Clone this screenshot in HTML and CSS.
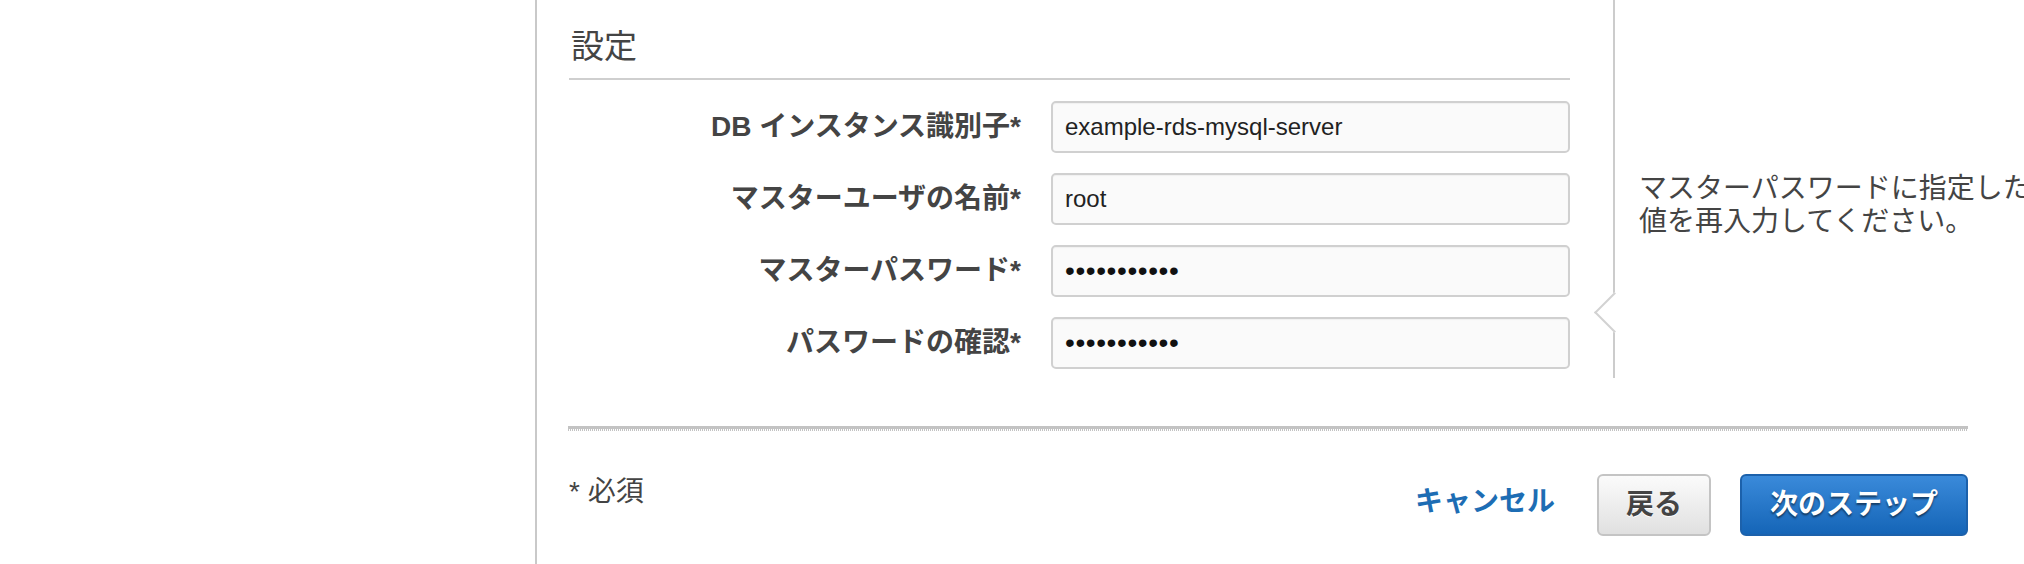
FILE: index.html
```html
<!DOCTYPE html>
<html lang="ja">
<head>
<meta charset="utf-8">
<title>設定</title>
<link rel="stylesheet" href="styles.css">
</head>
<body>
<div class="page">
  <aside class="side"></aside>
  <main class="main">
    <div class="top">
      <section class="form">
        <h2 class="heading">設定</h2>
        <div class="fields">
          <label class="label" for="f-id">DB インスタンス識別子*</label>
          <input class="field" id="f-id" type="text" value="example-rds-mysql-server">
          <label class="label" for="f-user">マスターユーザの名前*</label>
          <input class="field" id="f-user" type="text" value="root">
          <label class="label" for="f-pass">マスターパスワード*</label>
          <input class="field pass" id="f-pass" type="password" value="xxxxxxxxxxx">
          <label class="label" for="f-conf">パスワードの確認*</label>
          <input class="field pass" id="f-conf" type="password" value="xxxxxxxxxxx">
        </div>
      </section>
      <div class="help">
        <span class="arrow"></span>
        <p class="help-text">マスターパスワードに指定した値を再入力してください。</p>
      </div>
    </div>
    <div class="divider"></div>
    <div class="footer">
      <span class="required">* 必須</span>
      <div class="actions">
        <a class="cancel" href="#">キャンセル</a>
        <button class="btn back" type="button">戻る</button>
        <button class="btn next" type="button">次のステップ</button>
      </div>
    </div>
  </main>
</div>
</body>
</html>
```
FILE: styles.css
```css
html, body {
  margin: 0;
  padding: 0;
  overflow: hidden;
  background: #fff;
}
body {
  width: 2024px;
  height: 564px;
  font-family: "Liberation Sans", "Noto Sans CJK JP", sans-serif;
  color: #444;
}
.page {
  display: flex;
  height: 564px;
}
.side {
  width: 535px;
  flex: none;
}
.main {
  flex: none;
  width: 1600px;
  border-left: 2px solid #c9c9c9;
  padding-left: 32px;
}
.top {
  display: flex;
  align-items: flex-start;
}
.form {
  width: 1001px;
  flex: none;
  padding-top: 27px;
}
.heading {
  margin: 0;
  padding: 0 0 11px 2px;
  font-size: 33px;
  font-weight: normal;
  line-height: 40px;
  color: #444;
  border-bottom: 2px solid #cfcfcf;
}
.fields {
  display: grid;
  grid-template-columns: 452px 519px;
  column-gap: 30px;
  row-gap: 20px;
  margin-top: 21px;
  align-items: center;
}
.label {
  text-align: right;
  font-size: 28px;
  font-weight: bold;
  line-height: 32px;
  color: #444;
  white-space: nowrap;
}
.field {
  box-sizing: border-box;
  width: 519px;
  height: 52px;
  margin: 0;
  padding: 0 12px;
  border: 2px solid #d0d0d0;
  border-radius: 5px;
  background: #fafafa;
  box-shadow: inset 0 1px 1px rgba(0, 0, 0, 0.04);
  font-family: "Liberation Sans", "Noto Sans CJK JP", sans-serif;
  font-size: 24px;
  color: #222;
  outline: none;
}
.field.pass {
  font-size: 28px;
  letter-spacing: 0.6px;
  padding-left: 12px;
  color: #111;
}
.help {
  position: relative;
  flex: none;
  margin-left: 43px;
  height: 378px;
  border-left: 2px solid #cccccc;
  padding-left: 24px;
}
.arrow {
  position: absolute;
  left: -15.5px;
  top: 297.5px;
  width: 29px;
  height: 29px;
  box-sizing: border-box;
  background: #fff;
  border-left: 2px solid #d2d2d2;
  border-bottom: 2px solid #d2d2d2;
  transform: rotate(45deg);
}
.help-text {
  margin: 0;
  padding-top: 172px;
  width: 400px;
  font-size: 28px;
  line-height: 33px;
  color: #444;
}
.divider {
  width: 1400px;
  height: 5px;
  margin: 48px 0 0 -1px;
  background:
    linear-gradient(#c3c3c3, #c3c3c3) top left / 100% 3px no-repeat,
    repeating-linear-gradient(90deg, #c3c3c3 0 1px, transparent 1px 2px) bottom left / 100% 2px no-repeat;
}
.footer {
  width: 1399px;
  margin-top: 43px;
  display: flex;
  justify-content: space-between;
  align-items: flex-start;
}
.required {
  margin-top: 2px;
  font-size: 28px;
  line-height: 32px;
  color: #444;
}
.actions {
  display: flex;
  align-items: center;
}
.cancel {
  font-size: 28px;
  font-weight: bold;
  line-height: 32px;
  color: #1d6db4;
  text-decoration: none;
  margin-right: 42px;
  margin-top: -6px;
}
.btn {
  box-sizing: border-box;
  height: 62px;
  margin: 0;
  border: 2px solid;
  border-radius: 6px;
  font-family: "Liberation Sans", "Noto Sans CJK JP", sans-serif;
  font-size: 28px;
  font-weight: bold;
  line-height: 56px;
}
.back {
  padding: 0 27px;
  margin-right: 29px;
  border-color: #c4c4c4;
  background: linear-gradient(#fbfbfb, #e0e0e0);
  color: #444;
  text-shadow: 0 1px 0 #fff;
}
.next {
  padding: 0 28px;
  border-color: #1c61ab;
  background: linear-gradient(#3a8ada, #1565b7);
  color: #fff;
  text-shadow: 0 2px 2px rgba(0, 0, 0, 0.5);
}
```
